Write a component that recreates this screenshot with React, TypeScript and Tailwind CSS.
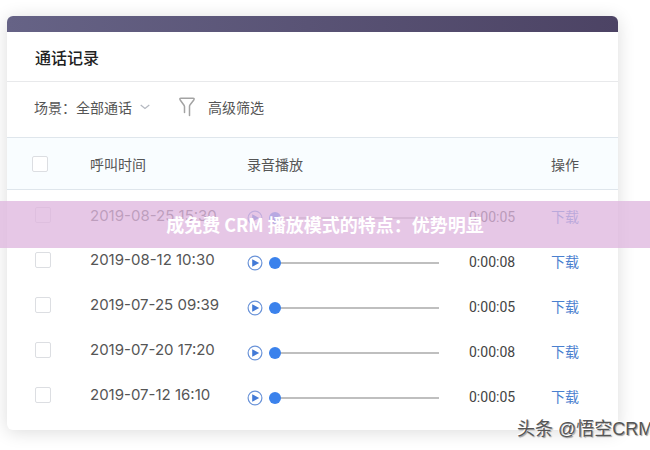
import React from "react";

type Call = { time: string; duration: string };

const calls: Call[] = [
  { time: "2019-08-25 15:30", duration: "0:00:05" },
  { time: "2019-08-12 10:30", duration: "0:00:08" },
  { time: "2019-07-25 09:39", duration: "0:00:05" },
  { time: "2019-07-20 17:20", duration: "0:00:08" },
  { time: "2019-07-12 16:10", duration: "0:00:05" },
];

function Check({ label }: { label: string }) {
  return (
    <input
      type="checkbox"
      aria-label={label}
      className="block size-4 appearance-none rounded-xs border border-[#dcdee2] bg-white checked:bg-[#3b82ec]"
    />
  );
}

function Player({ name }: { name: string }) {
  return (
    <div className="flex items-center gap-1.5">
      <button type="button" aria-label={`播放 ${name}`} className="size-4 shrink-0">
        <svg viewBox="0 0 16 16" className="size-4">
          <circle cx="8" cy="8" r="6.9" fill="#fff" stroke="#6a93d8" strokeWidth="1.2" />
          <path d="M5.2 4.2 12.2 8l-7 3.8z" fill="#4279d6" />
        </svg>
      </button>
      <input
        type="range"
        min={0}
        max={100}
        defaultValue={0}
        aria-label={`播放进度 ${name}`}
        className="h-3 min-w-0 flex-1 appearance-none bg-transparent [&::-webkit-slider-runnable-track]:h-0.5 [&::-webkit-slider-runnable-track]:bg-[#bfbfbf] [&::-webkit-slider-thumb]:-mt-[5px] [&::-webkit-slider-thumb]:size-3 [&::-webkit-slider-thumb]:appearance-none [&::-webkit-slider-thumb]:rounded-full [&::-webkit-slider-thumb]:bg-[#3b82ec]"
      />
    </div>
  );
}

export default function App() {
  return (
    <div className="relative min-h-screen overflow-hidden bg-white pt-4 pr-8 pb-5 pl-[7px] font-['Noto_Sans_CJK_SC',sans-serif] text-sm text-[#555]">
      <main className="overflow-hidden rounded-md bg-white pb-[15px] shadow-[0_2px_18px_rgba(0,0,0,0.14)]">
        <div className="h-4 bg-linear-to-r from-[#666386] to-[#4c4364]" />
        <header className="flex h-[50px] items-center border-b border-[#e8e9eb] px-7">
          <h1 className="text-base font-medium text-[#222]">通话记录</h1>
        </header>

        <div className="flex h-[55px] items-center px-[27px] pb-1.5">
          <label htmlFor="scene">场景：</label>
          <div className="flex items-center">
            <select id="scene" defaultValue="all" className="-mr-3 appearance-none bg-transparent pr-5">
              <option value="all">全部通话</option>
            </select>
            <svg viewBox="0 0 10 6" className="pointer-events-none h-1.5 w-2.5" fill="none" stroke="#b4b8c0" strokeWidth="1.2">
              <path d="M.7 1 5 4.5 9.3 1" />
            </svg>
          </div>
          <button type="button" className="ml-7 flex items-center gap-3">
            <svg
              viewBox="0 0 18 20"
              className="h-5 w-[18px]"
              fill="none"
              stroke="#a3a3a3"
              strokeWidth="1.5"
              strokeLinecap="round"
              strokeLinejoin="round"
            >
              <path d="M6.5 15.5V9.8Q6.5 9 6 8.3L2.2 3Q1.2 1.2 3 1.2h12q1.8 0 .8 1.8l-3.7 4.8q-.6.8-.6 1.7v9" />
            </svg>
            高级筛选
          </button>
        </div>

        <table className="w-full table-fixed border-collapse text-left">
          <colgroup>
            <col className="w-[83px]" />
            <col className="w-[157px]" />
            <col />
            <col className="w-[82px]" />
            <col className="w-[67px]" />
          </colgroup>
          <thead>
            <tr className="h-[52px] border-y border-[#dfe6ec] bg-[#f9fdff]">
              <th className="pl-[25px]">
                <Check label="全选" />
              </th>
              <th className="font-normal">呼叫时间</th>
              <th className="font-normal">录音播放</th>
              <th aria-label="时长" />
              <th className="font-normal">操作</th>
            </tr>
          </thead>
          <tbody>
            {calls.map((call) => (
              <tr key={call.time} className="h-[45px]">
                <td className="pt-1.5 pl-7">
                  <Check label={call.time} />
                </td>
                <td className="pt-1.5 font-['Inter',sans-serif] text-[15px]">{call.time}</td>
                <td className="pt-3 pr-[30px]">
                  <Player name={call.time} />
                </td>
                <td className="pt-2.5 font-['Roboto',sans-serif] text-[#444]">{call.duration}</td>
                <td className="pt-2">
                  <a href="#download" className="text-[#4a80cf]">
                    下载
                  </a>
                </td>
              </tr>
            ))}
          </tbody>
        </table>
      </main>

      <div className="absolute inset-x-0 top-[201px] flex h-[47px] items-center justify-center bg-[#deb5de]/76 pb-0.5 text-lg font-bold text-white">
        成免费 CRM 播放模式的特点：优势明显
      </div>

      <div className="absolute top-[415px] left-[517px] font-['Liberation_Sans','Noto_Sans_CJK_SC',sans-serif] text-lg whitespace-nowrap text-[#555] [text-shadow:-1px_-1px_0_#fff,1px_1px_1px_#999]">
        头条 @悟空CRM
      </div>
    </div>
  );
}
